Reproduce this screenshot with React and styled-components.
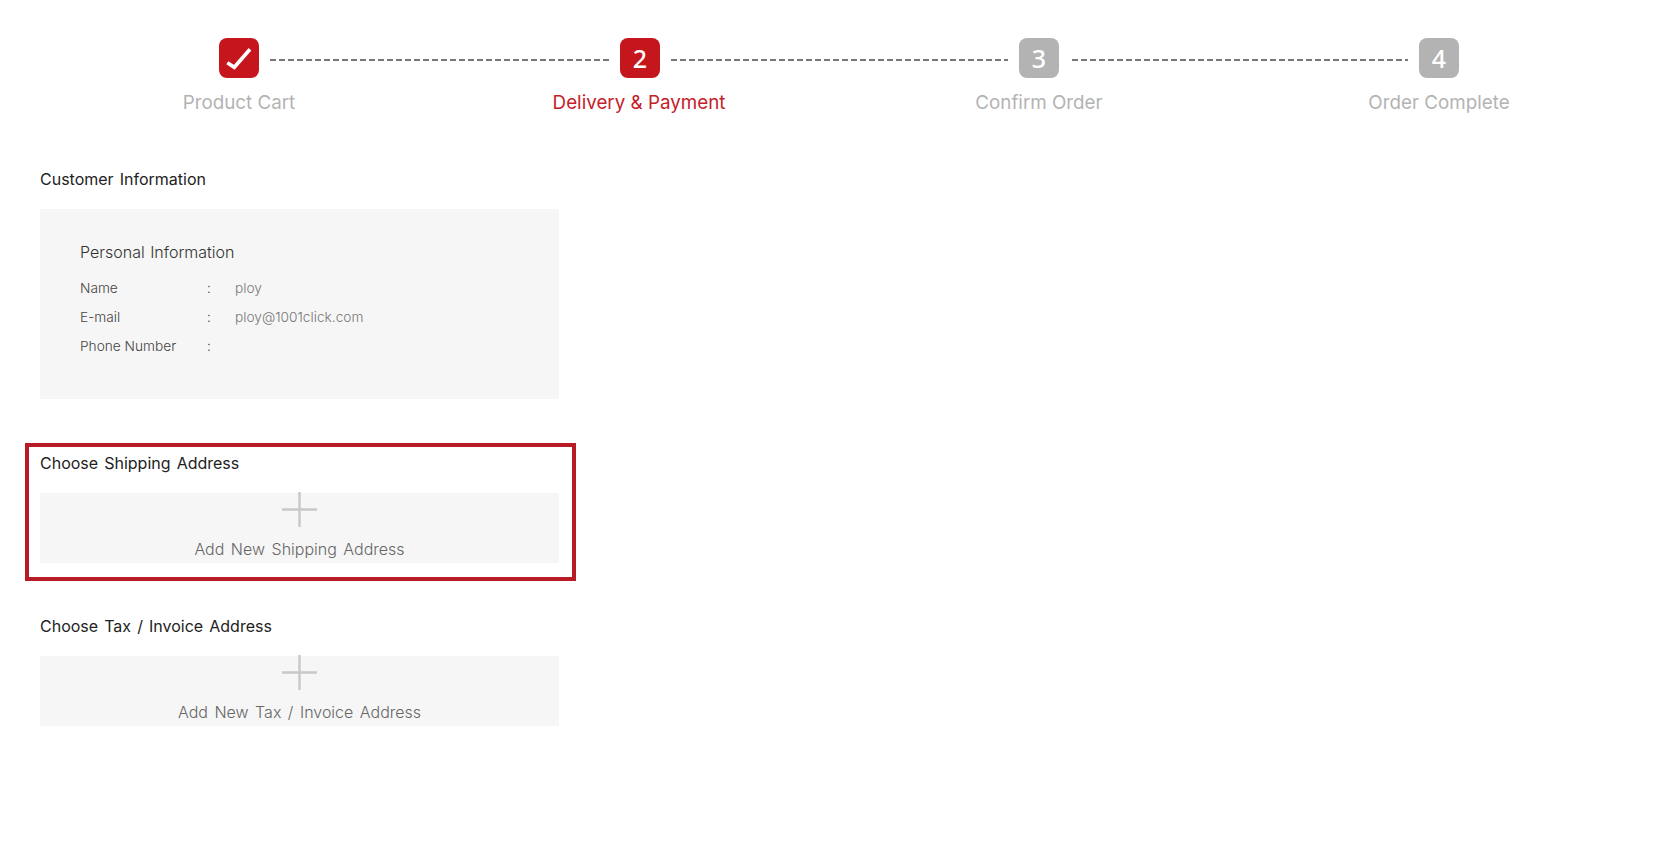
import { Fragment } from "react";
import styled, { createGlobalStyle } from "styled-components";

const steps = [
  { label: "Product Cart", state: "done" },
  { label: "Delivery & Payment", state: "active", line: 339, gap: 11 },
  { label: "Confirm Order", state: "todo", line: 337, gap: 11 },
  { label: "Order Complete", state: "todo", line: 336, gap: 13 },
];

const personal = [
  { name: "Name", value: "ploy" },
  { name: "E-mail", value: "ploy@1001click.com" },
  { name: "Phone Number", value: "" },
];

const GlobalStyle = createGlobalStyle`
  html, body {
    margin: 0;
    background: #fff;
    font-family: Inter, "Noto Sans", sans-serif;
  }
  * { box-sizing: border-box; }
`;

const Page = styled.div`
  width: 1667px;
  height: 848px;
  overflow: hidden;
  padding: 38px 0 0 39px;
`;

const BadgeRow = styled.div`
  display: flex;
  align-items: center;
  width: 1600px;
  padding: 0 180px;
`;

const Badge = styled.div`
  flex: none;
  width: 40px;
  height: 40px;
  border-radius: 8px;
  display: flex;
  align-items: center;
  justify-content: center;
  color: #fff;
  font-family: "Noto Sans", sans-serif;
  font-size: 25px;
  font-weight: 500;
  background: ${(props) => (props.$state === "todo" ? "#b3b3b3" : "#c5161d")};
`;

const Connector = styled.div`
  flex: none;
  width: ${(props) => props.$len}px;
  height: 2px;
  margin: 3px 11px 0 ${(props) => props.$gap}px;
  background: repeating-linear-gradient(to right, #777 0 6px, transparent 6px 9px);
`;

const LabelRow = styled.div`
  display: grid;
  grid-template-columns: repeat(4, 400px);
  margin-top: 12px;
`;

const StepLabel = styled.div`
  text-align: center;
  font-size: 18.8px;
  font-weight: 400;
  line-height: 26px;
  color: ${(props) => (props.$state === "active" ? "#c4202a" : "#b3b3b3")};
`;

const Content = styled.div`
  width: 537px;
  margin-left: -14px;
`;

const Plain = styled.section`
  padding: 0 0 0 15px;
  margin-top: ${(props) => props.$top}px;
`;

const Framed = styled.section`
  border: 4px solid #b71c25;
  width: 551px;
  height: 138px;
  padding: 4px 13px 0 11px;
  margin-top: 44px;
`;

const Heading = styled.h2`
  margin: 0;
  font-size: 16px;
  font-weight: 400;
  line-height: 24px;
  word-spacing: 1.6px;
  color: #222;
`;

const InfoCard = styled.div`
  width: 519px;
  height: 190px;
  margin-top: 18px;
  padding: 31px 40px 0;
  background: #f6f6f6;
`;

const CardTitle = styled.h3`
  margin: 0 0 9px;
  font-size: 16px;
  font-weight: 300;
  line-height: 24px;
  word-spacing: 1px;
  color: #333;
`;

const InfoRow = styled.div`
  display: grid;
  grid-template-columns: 127px 28px 1fr;
  height: 29px;
  align-items: center;
  font-size: 13.7px;
  font-weight: 300;
  color: #444;
`;

const InfoValue = styled.span`
  color: #777;
`;

const AddBox = styled.div`
  width: 519px;
  height: 70px;
  margin-top: 18px;
  background: #f6f6f6;
  display: flex;
  flex-direction: column;
  align-items: center;
`;

const PlusIcon = styled.svg`
  display: block;
  width: 35px;
  height: 35px;
  margin-top: -1px;
`;

const AddLabel = styled.span`
  margin-top: 10px;
  font-size: 16px;
  font-weight: 300;
  line-height: 24px;
  word-spacing: 2px;
  color: #666;
`;

function Plus() {
  return (
    <PlusIcon viewBox="0 0 35 35">
      <path d="M0 17.5H35M17.5 0V35" stroke="#c8c8c8" strokeWidth="2.4" fill="none" />
    </PlusIcon>
  );
}

function Check() {
  return (
    <svg width="40" height="40" viewBox="0 0 40 40">
      <path d="M8.3 24.7L15.3 29.3L31 11.3" stroke="#fff" strokeWidth="3.6" fill="none" />
    </svg>
  );
}

export default function App() {
  return (
    <>
      <GlobalStyle />
      <Page>
        <BadgeRow>
          {steps.map((step, i) => (
            <Fragment key={step.label}>
              {i > 0 && <Connector $len={step.line} $gap={step.gap} />}
              <Badge $state={step.state}>
                {step.state === "done" ? <Check /> : i + 1}
              </Badge>
            </Fragment>
          ))}
        </BadgeRow>
        <LabelRow>
          {steps.map((step) => (
            <StepLabel key={step.label} $state={step.state}>{step.label}</StepLabel>
          ))}
        </LabelRow>

        <Content>
          <Plain $top={51}>
            <Heading>Customer Information</Heading>
            <InfoCard>
              <CardTitle>Personal Information</CardTitle>
              {personal.map((row) => (
                <InfoRow key={row.name}>
                  <span>{row.name}</span>
                  <span>:</span>
                  <InfoValue>{row.value}</InfoValue>
                </InfoRow>
              ))}
            </InfoCard>
          </Plain>

          <Framed>
            <Heading>Choose Shipping Address</Heading>
            <AddBox>
              <Plus />
              <AddLabel>Add New Shipping Address</AddLabel>
            </AddBox>
          </Framed>

          <Plain $top={33}>
            <Heading>Choose Tax / Invoice Address</Heading>
            <AddBox>
              <Plus />
              <AddLabel>Add New Tax / Invoice Address</AddLabel>
            </AddBox>
          </Plain>
        </Content>
      </Page>
    </>
  );
}
